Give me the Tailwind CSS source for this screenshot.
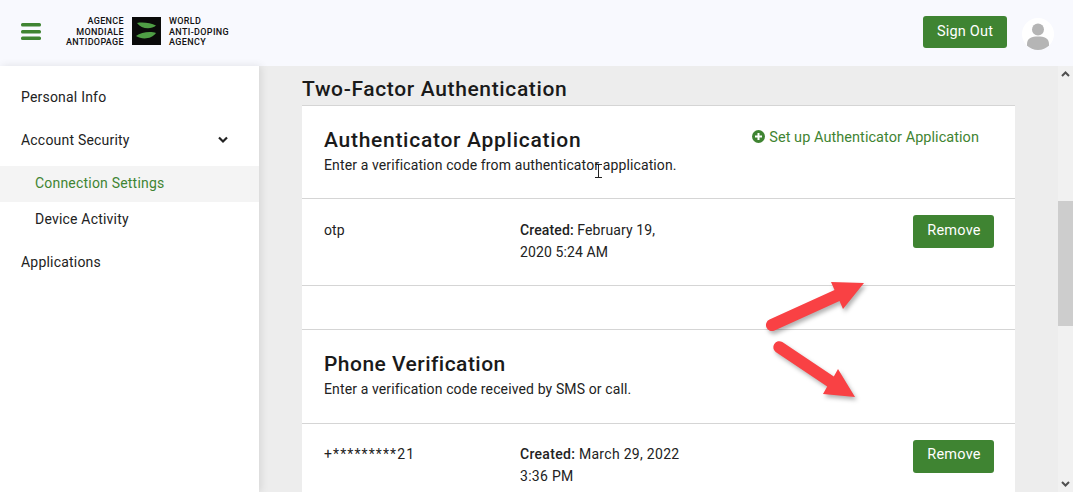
<!DOCTYPE html>
<html><head><meta charset="utf-8"><script src="https://cdn.jsdelivr.net/npm/@tailwindcss/browser@4"></script></head>
<body class="m-0">
<div class="relative w-[1073px] h-[492px] overflow-hidden bg-white font-['Roboto',sans-serif] text-[#222] flex flex-col">
  <header class="h-[66px] shrink-0 bg-[#f8f9fe] flex items-center pl-[21px] pr-[19px]">
    <svg width="20" height="17" viewBox="0 0 20 17" class="mt-[-4px]"><g fill="#3f8432"><rect y="0" width="20" height="3.4" rx="1.5"/><rect y="7" width="20" height="3.4" rx="1.5"/><rect y="13.5" width="20" height="3.4" rx="1.5"/></g></svg>
    <div class="ml-[4px] w-[79px] text-right text-[9px] leading-[10.7px] font-medium tracking-[0.35px] text-[#111] mt-[-2px]"><div>AGENCE</div><div>MONDIALE</div><div>ANTIDOPAGE</div></div>
    <svg width="29" height="28" viewBox="0 0 29 28" class="ml-[8px] mt-[-4px]"><rect width="29" height="28" fill="#0a0a0a"/><path d="M5 6 C11 5 19 6 24 8.5 C19 13 9 12 5 6Z" fill="#4f9e45"/><path d="M4 19 C9 15 19 14 24 16 C20 22 10 23 4 19Z" fill="#4f9e45"/></svg>
    <div class="ml-[8px] text-[9px] leading-[10.7px] font-medium tracking-[0.35px] text-[#111] mt-[-2px]"><div>WORLD</div><div>ANTI-DOPING</div><div>AGENCY</div></div>
    <div class="ml-auto flex items-center gap-[15px]">
      <button class="w-[84px] h-[32px] bg-[#3f8432] rounded-[3px] text-white text-[14.5px] tracking-[0.2px] mt-[-3px]">Sign Out</button>
      <div class="w-[32px] h-[32px] rounded-full bg-white overflow-hidden mt-[1px]">
        <svg width="32" height="32" viewBox="0 0 32 32"><circle cx="16" cy="11.5" r="6" fill="#b5b5b5"/><path d="M5 32 V26 C5 20 10 18.5 16 18.5 C22 18.5 27 20 27 26 V32Z" fill="#b5b5b5"/></svg>
      </div>
    </div>
  </header>
  <div class="flex flex-1 min-h-0">
    <nav class="w-[259px] shrink-0 bg-white text-[14px] tracking-[0.2px] relative z-10 shadow-[2px_0_8px_rgba(0,0,0,0.1)] pt-[14px]">
      <div class="h-[36px] pb-[2px] flex items-center pl-[21px]">Personal Info</div>
      <div class="h-[36px] pb-[2px] mt-[7px] flex items-center justify-between pl-[21px] pr-[31px]"><span>Account Security</span>
        <svg width="10" height="8" viewBox="0 0 10 8" class="mt-[-1px]"><path d="M1 1.5 L5 5.5 L9 1.5" fill="none" stroke="#222" stroke-width="2.2"/></svg></div>
      <div class="h-[36px] pb-[2px] mt-[7px] flex items-center pl-[35px] bg-[#f4f4f4] text-[#3f8432]">Connection Settings</div>
      <div class="h-[36px] pb-[2px] flex items-center pl-[35px]">Device Activity</div>
      <div class="h-[36px] pb-[2px] mt-[7px] flex items-center pl-[21px]">Applications</div>
    </nav>
    <main class="flex-1 bg-[#ededed] pl-[43px] min-w-0 overflow-hidden">
      <h2 class="h-[39px] pt-[9px] text-[21px] leading-[28px] font-medium tracking-[0.64px] text-[#1a1a1a]">Two-Factor Authentication</h2>
      <div class="w-[713px] bg-white border-t border-[#d5d5d5]">
        <section class="h-[93px] pl-[22px] pr-[36px] border-b border-[#d5d5d5] flex justify-between">
          <div class="pt-[20px]">
            <h3 class="text-[21px] leading-[28px] font-medium tracking-[0.72px] text-[#1a1a1a]">Authenticator Application</h3>
            <p class="text-[14px] leading-[20px] tracking-[0.12px] mt-[1px]">Enter a verification code from authenticator application.</p>
          </div>
          <div class="pt-[23px] flex items-start gap-[4px] text-[#3f8432] text-[14.5px] leading-[18px] tracking-[0.05px]">
            <svg width="13" height="13" viewBox="0 0 13 13" class="mt-[1px]"><circle cx="6.5" cy="6.5" r="6.5" fill="#3f8432"/><path d="M6.5 3 V10 M3 6.5 H10" stroke="#fff" stroke-width="2"/></svg>
            <span>Set up Authenticator Application</span>
          </div>
        </section>
        <section class="h-[87px] pl-[21px] pr-[21px] border-b border-[#d5d5d5] flex pt-[16px]">
          <div class="w-[197px] text-[14px] leading-[22px] tracking-[0.12px] pt-[4px] pl-[1px]">otp</div>
          <div class="w-[160px] text-[14px] leading-[22px] tracking-[0.12px] pt-[4px]"><b class="font-medium">Created:</b> February 19, 2020 5:24 AM</div>
          <button class="ml-auto w-[81px] h-[33px] bg-[#3f8432] rounded-[3px] text-white text-[14.5px] tracking-[0.2px] pb-[2px] pl-[1px]">Remove</button>
        </section>
        <div class="h-[43px] bg-white"></div>
        <section class="h-[95px] pl-[22px] border-y border-[#d5d5d5] pt-[20px]">
          <h3 class="text-[21px] leading-[28px] font-medium tracking-[0.47px] text-[#1a1a1a]">Phone Verification</h3>
          <p class="text-[14px] leading-[20px] tracking-[0.12px] mt-[1px]">Enter a verification code received by SMS or call.</p>
        </section>
        <section class="h-[87px] pl-[21px] pr-[21px] flex pt-[16px]">
          <div class="w-[197px] text-[14px] leading-[22px] tracking-[1.1px] pt-[3px] pl-[1px]">+*********21</div>
          <div class="w-[170px] text-[14px] leading-[22px] tracking-[0.3px] pt-[3px]"><b class="font-medium">Created:</b> March 29, 2022<br>3:36 PM</div>
          <button class="ml-auto w-[81px] h-[33px] bg-[#3f8432] rounded-[3px] text-white text-[14.5px] tracking-[0.2px] pb-[3px] pl-[1px]">Remove</button>
        </section>
      </div>
    </main>
    <aside class="w-[15px] shrink-0 bg-[#f1f1f1] flex flex-col justify-between items-center py-[5px]">
      <svg width="9" height="6" viewBox="0 0 9 6"><path d="M1 5 L4.5 1.5 L8 5" fill="none" stroke="#505050" stroke-width="2"/></svg>
      <svg width="9" height="6" viewBox="0 0 9 6"><path d="M1 1 L4.5 4.5 L8 1" fill="none" stroke="#505050" stroke-width="2"/></svg>
    </aside>
  </div>
  <div class="absolute left-[1058px] top-[201px] w-[15px] h-[125px] bg-[#cdcdcd]"></div>
  <svg class="absolute left-[760px] top-[275px]" width="110" height="130" viewBox="0 0 110 130" style="filter:drop-shadow(2px 3px 2px rgba(0,0,0,0.3))">
    <g fill="#f94144">
      <path d="M9.5 44.5 L74.5 15 L71 7 L104 8 L83 34 L79.5 26 L14.5 55.5 A6 6 0 0 1 9.5 44.5Z"/>
      <path d="M22.3 67 L73.8 101.5 L78 94 L95 122 L63 119 L67.2 111.5 L15.7 77 A6 6 0 0 1 22.3 67Z"/>
    </g>
  </svg>
  <svg class="absolute left-[594px] top-[164px]" width="9" height="15" viewBox="0 0 9 15"><path d="M1 .5 H8 M4.5 .5 V13.5 M1 13.5 H8" stroke="#222" stroke-width="1" fill="none"/></svg>
</div>
</body></html>
